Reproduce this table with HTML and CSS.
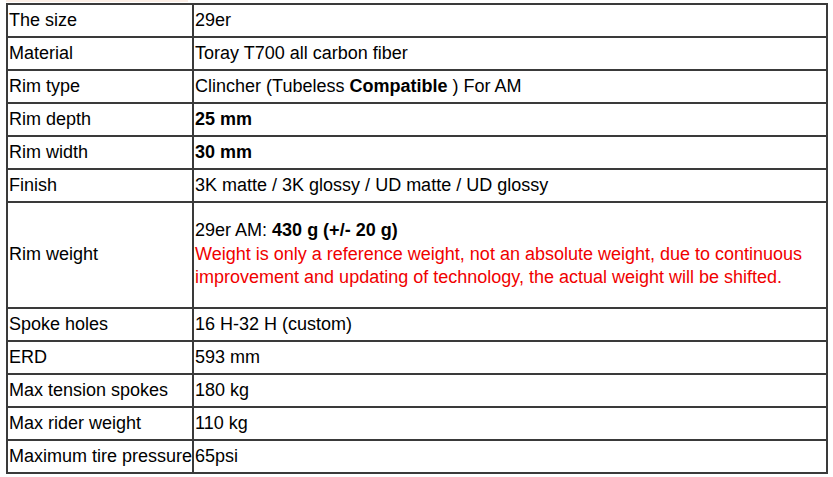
FILE: index.html
```html
<!DOCTYPE html>
<html>
<head>
<meta charset="utf-8">
<link rel="stylesheet" href="styles.css">
</head>
<body>
<div class="trace"></div>
<table class="spec">
  <tr><td class="k">The size</td><td class="v">29er</td></tr>
  <tr><td class="k">Material</td><td class="v">Toray T700 all carbon fiber</td></tr>
  <tr><td class="k">Rim type</td><td class="v">Clincher (Tubeless <b>Compatible</b> ) For AM</td></tr>
  <tr><td class="k">Rim depth</td><td class="v"><b>25 mm</b></td></tr>
  <tr><td class="k">Rim width</td><td class="v"><b>30 mm</b></td></tr>
  <tr><td class="k">Finish</td><td class="v">3K matte / 3K glossy / UD matte / UD glossy</td></tr>
  <tr class="tall"><td class="k">Rim weight</td><td class="v">29er AM: <b>430 g (+/- 20 g)</b><br><span class="note">Weight is only a reference weight, not an absolute weight, due to continuous<br>improvement and updating of technology, the actual weight will be shifted.</span></td></tr>
  <tr><td class="k">Spoke holes</td><td class="v">16 H-32 H (custom)</td></tr>
  <tr><td class="k">ERD</td><td class="v">593 mm</td></tr>
  <tr><td class="k">Max tension spokes</td><td class="v">180 kg</td></tr>
  <tr><td class="k">Max rider weight</td><td class="v">110 kg</td></tr>
  <tr><td class="k">Maximum tire pressure</td><td class="v">65psi</td></tr>
</table>
</body>
</html>
```

FILE: styles.css
```css
html, body {
  margin: 0;
  padding: 0;
  background: #ffffff;
}
body {
  font-family: "Liberation Sans", Arial, sans-serif;
  font-size: 18px;
  color: #000;
  padding-left: 6px;
}
.trace {
  width: 182px;
  height: 2px;
  background: #fbeee6;
  margin-bottom: 1px;
}
.spec {
  border-collapse: separate;
  border-spacing: 0;
  border: 1px solid #3a3a3a;
  width: 822px;
}
.spec td {
  border: 1px solid #3a3a3a;
  padding: 5px 1px;
  line-height: 21px;
  vertical-align: middle;
}
.spec td.k {
  white-space: nowrap;
  padding-right: 0;
}
.spec td.v {
  width: 100%;
}
.spec tr.tall td {
  line-height: 23.5px;
  padding-top: 16px;
  padding-bottom: 17px;
}
.note {
  color: #f00000;
}
```
